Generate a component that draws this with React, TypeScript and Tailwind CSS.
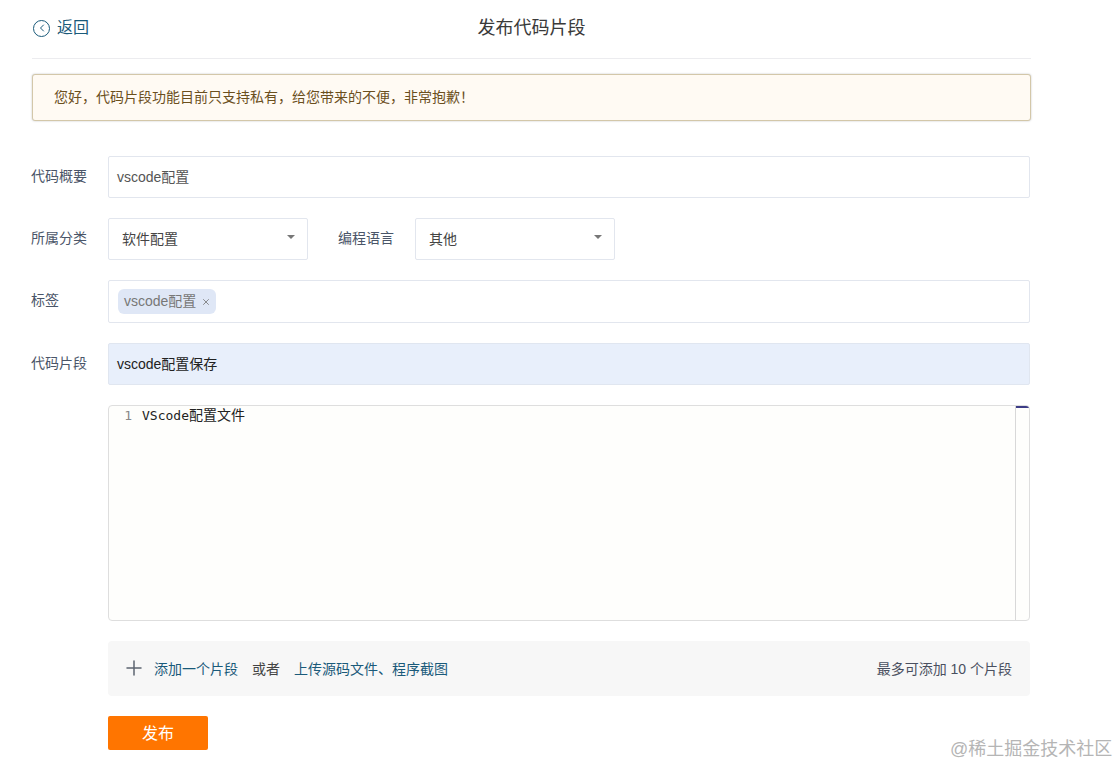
import { ChevronLeft, Plus, X } from "lucide-react";

const font = "font-['Liberation_Sans','Noto_Sans_CJK_SC',sans-serif]";

const Label = ({ text }: { text: string }) => (
  <span className="-ml-[1px] mr-[1px] w-[76px] shrink-0 pt-[10px] text-[14px] leading-[20px] text-[#4a5568]">
    {text}
  </span>
);

const Select = ({ value }: { value: string }) => (
  <div className="flex h-[42px] w-[200px] items-center justify-between rounded-[2px] border border-[#e2e6ee] bg-white pl-[13px] pr-[12px] text-[14px] text-[#444]">
    <span className="pt-[1px]">{value}</span>
    <span className="mb-[4px] h-0 w-0 border-x-[4px] border-t-[4px] border-x-transparent border-t-[#777]" />
  </div>
);

export default function App() {
  return (
    <div className={`relative h-[766px] w-[1117px] overflow-hidden bg-white ${font}`}>
      <div className="ml-[32px] w-[999px]">
        <header className="relative flex h-[59px] items-center justify-center border-b border-[#ececef] pb-[2px]">
          <a className="absolute left-[1px] top-[18px] flex items-center gap-[7px] text-[16px] leading-[20px] text-[#1a5a7a]">
            <span className="flex h-[17px] w-[17px] items-center justify-center rounded-full border border-[#1a5a7a]">
              <ChevronLeft className="h-[12px] w-[12px]" strokeWidth={2} />
            </span>
            返回
          </a>
          <h1 className="text-[18px] font-normal leading-[24px] text-[#3a3a3a]">发布代码片段</h1>
        </header>

        <div className="mt-[15px] flex h-[47px] items-center rounded-[3px] border border-[#d3c7a9] bg-[#fffaf3] pl-[21px] text-[14px] text-[#6b4f1d] shadow-[0_0_2px_rgba(0,0,0,0.25)]">
          您好，代码片段功能目前只支持私有，给您带来的不便，非常抱歉！
        </div>

        <div className="mt-[35px] flex h-[42px]">
          <Label text="代码概要" />
          <div className="flex w-[922px] items-center rounded-[2px] border border-[#e2e6ee] bg-white pl-[8px] text-[14px] text-[#555]">
            vscode配置
          </div>
        </div>

        <div className="mt-[20px] flex h-[42px]">
          <Label text="所属分类" />
          <Select value="软件配置" />
          <span className="ml-[30px] w-[77px] pt-[10px] text-[14px] leading-[20px] text-[#4a5568]">编程语言</span>
          <Select value="其他" />
        </div>

        <div className="mt-[20px] flex h-[43px]">
          <Label text="标签" />
          <div className="flex w-[922px] items-center rounded-[2px] border border-[#e2e6ee] bg-white pl-[9px]">
            <span className="flex h-[25px] items-center gap-[5px] rounded-[6px] bg-[#dfe7f6] pl-[6px] pr-[5px] text-[14px] text-[#777]">
              vscode配置
              <X className="mt-[1px] h-[10px] w-[10px]" strokeWidth={2} />
            </span>
          </div>
        </div>

        <div className="mt-[20px] flex h-[42px]">
          <Label text="代码片段" />
          <div className="flex w-[922px] items-center rounded-[2px] border border-[#e0e6f0] bg-[#e8effb] pl-[8px] text-[14px] text-[#222]">
            vscode配置保存
          </div>
        </div>

        <div className="ml-[76px] mt-[20px] flex h-[216px] w-[922px] overflow-hidden rounded-[4px] border border-[#dedede] bg-[#fefefc]">
          <div className="flex-1 pt-[1px] font-['DejaVu_Sans_Mono','Noto_Sans_CJK_SC',monospace] text-[13px] leading-[16px]">
            <span className="inline-block w-[33px] pr-[10px] text-right text-[#888]">1</span>
            <span className="text-[#222]">
              VScode<span className="text-[14px]">配置文件</span>
            </span>
          </div>
          <div className="w-[14px] border-l border-[#d8d8d8]">
            <div className="h-[2px] bg-[#3c3c86]" />
          </div>
        </div>

        <div className="ml-[76px] mt-[20px] flex h-[55px] w-[922px] items-center justify-between rounded-[4px] bg-[#f7f7f7] pb-[1px] pl-[14px] pr-[18px] text-[14px]">
          <div className="flex items-center">
            <Plus className="mr-[8px] h-[24px] w-[24px] text-[#5c6470]" strokeWidth={1.5} />
            <span className="pt-[2px] text-[#1a5a7a]">添加一个片段</span>
            <span className="ml-[14px] pt-[2px] text-[#444]">或者</span>
            <span className="ml-[14px] pt-[2px] text-[#1a5a7a]">上传源码文件、程序截图</span>
          </div>
          <span className="pt-[2px] text-[#4a5060]">最多可添加 10 个片段</span>
        </div>

        <button className="ml-[76px] mt-[20px] block h-[34px] w-[100px] rounded-[2px] bg-[#ff7500] pt-[1px] text-[16px] text-white">
          发布
        </button>
      </div>

      <span className="absolute left-[950px] top-[737px] text-[18px] leading-[24px] text-[#b5b5b5]">
        @稀土掘金技术社区
      </span>
    </div>
  );
}
